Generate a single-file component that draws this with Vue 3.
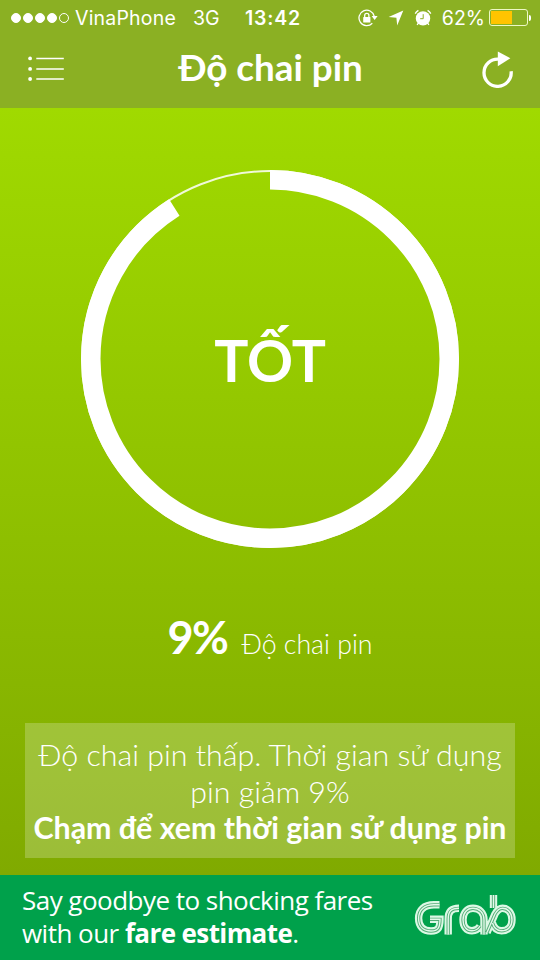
<script setup>
const wear = 9
const radius = 179.25
const circumference = 2 * Math.PI * radius
const ringDash = `${circumference * (1 - wear / 100)} ${circumference}`
const signal = [true, true, true, true, false]
</script>

<template>
  <div class="screen">
    <header class="top">
      <div class="status">
        <div class="carrier">
          <span class="dots">
            <i v-for="(on, n) in signal" :key="n" class="dot" :class="{ on }"></i>
          </span>
          <span class="operator">VinaPhone</span>
          <span class="network">3G</span>
        </div>
        <span class="clock">13:42</span>
        <div class="indicators">
          <svg class="lock" viewBox="0 0 20 18" width="20" height="18">
            <path d="M16.2 7.2A7.7 7.7 0 1 0 14.3 14.2" fill="none" stroke="#fff" stroke-width="1.3" />
            <path d="M13.6 7h6l-3 4z" fill="#fff" />
            <rect x="5.2" y="8" width="7.2" height="5.5" rx=".6" fill="#fff" />
            <path d="M6.7 8.2V6.5a2.1 2.1 0 0 1 4.2 0v1.7" fill="none" stroke="#fff" stroke-width="1.3" />
          </svg>
          <svg class="arrow" viewBox="0 0 16 16" width="16" height="16">
            <path d="M15.3.5 9.2 15.5 8.4 7.8.6 7z" fill="#fff" />
          </svg>
          <svg class="alarm" viewBox="0 0 18 18" width="18" height="18">
            <circle cx="9" cy="9.4" r="7.2" fill="#fff" />
            <path d="M1.2 4.6A9.5 9.5 0 0 1 4.4 1.4M13.6 1.4a9.500 9.500 0 0 1 3.200 3.200" fill="none" stroke="#fff" stroke-width="1.4" />
            <path d="m4.300 14.200-1.200 1.800M13.700 14.200l1.200 1.800" stroke="#fff" stroke-width="1.3" />
            <path d="M9.200 5.200v4.500H6.200" fill="none" stroke="#8bb023" stroke-width="1" />
          </svg>
          <span class="percent">62%</span>
          <span class="battery"><i class="charge"></i></span>
          <i class="nub"></i>
        </div>
      </div>
      <div class="nav">
        <svg viewBox="0 0 36 26" width="36" height="26">
          <g fill="#fff">
            <circle cx="2.1" cy="2.4" r="1.9" />
            <circle cx="2.1" cy="12.9" r="1.9" />
            <circle cx="2.1" cy="23" r="1.9" />
          </g>
          <path d="M8.3 2.6h27.5M8.3 12.9h27.5M8.3 23h27.5" stroke="#fff" stroke-width="1.5" />
        </svg>
        <h1>Độ chai pin</h1>
        <svg viewBox="0 0 32 38" width="32" height="38">
          <path d="M16.5 9.2A13.6 13.6 0 1 0 29.1 21.2" fill="none" stroke="#fff" stroke-width="3.3" />
          <path d="M15.8 1.6v14.6l12.6-8z" fill="#fff" />
        </svg>
      </div>
    </header>

    <main>
      <div class="gauge">
        <svg class="ring" viewBox="0 0 378 378" width="378" height="378">
          <circle cx="189" cy="189" r="188" fill="none" stroke="#fff" stroke-opacity=".85" stroke-width="2" />
          <circle cx="189" cy="189" :r="radius" fill="none" stroke="#fff" stroke-width="19.5" :stroke-dasharray="ringDash" transform="rotate(-90 189 189)" />
        </svg>
        <strong class="grade">TỐT</strong>
      </div>
      <div class="wear">
        <strong>{{ wear }}%</strong>
        <span>Độ chai pin</span>
      </div>
      <section class="notice">
        <p class="light">Độ chai pin thấp. Thời gian sử dụng</p>
        <p class="light">pin giảm {{ wear }}%</p>
        <p class="bold">Chạm để xem thời gian sử dụng pin</p>
      </section>
    </main>

    <footer class="banner">
      <div class="copy">
        <p>Say goodbye to shocking fares</p>
        <p>with our <b>fare estimate</b>.</p>
      </div>
      <svg class="brand" viewBox="0 0 104 44" width="104" height="44" fill="none" aria-label="Grab">
        <g stroke="#dcf8e5" stroke-width="7.4">
          <path id="mark" d="M26.500 10.800H21C11 10.800 5.600 16 5.600 24.300S10.500 37 18 37C25 37 27 34 27 25.300H17M35.200 40.500V25C35.200 17.500 38 14.300 46 14.300M71 40.500V26C71 18.500 66 14.300 60 14.300S50 19 50 25.800S53.500 36.800 59 36.800C63 36.800 65 35.500 67 32M74 38.500 82 20C84 16.500 86 14.300 89.500 14.300C95 14.300 99 19 99 25.700S95 36.800 88.500 36.800C84 36.800 81 34 79.500 29M80.500 14V1" />
        </g>
        <use href="#mark" stroke="#55ad78" stroke-width="3.300" />
        <use href="#mark" stroke="#e4faeb" stroke-width="1.400" />
      </svg>
    </footer>
  </div>
</template>

<style>
body {
  margin: 0;
}
</style>

<style scoped>
.screen {
  width: 540px;
  height: 960px;
  display: flex;
  flex-direction: column;
  overflow: hidden;
  color: #fff;
  font-family: Lato, "Noto Sans", sans-serif;
}
h1,
p {
  margin: 0;
}
svg {
  display: block;
  flex: none;
}
.top {
  height: 108px;
  background: #8bb023;
}
.status {
  height: 35px;
  display: grid;
  grid-template-columns: 234px auto 1fr;
  align-items: center;
  padding: 0 9px 0 11px;
  font-family: Inter, sans-serif;
  font-size: 19.5px;
  white-space: nowrap;
}
.carrier,
.indicators,
.dots {
  display: flex;
  align-items: center;
}
.dots {
  gap: 2px;
}
.dot {
  box-sizing: border-box;
  width: 10px;
  height: 10px;
  border: 1px solid #fff;
  border-radius: 50%;
}
.dot.on {
  background: #fff;
}
.operator {
  margin-left: 6px;
  letter-spacing: 0.2px;
}
.network {
  margin-left: 17px;
}
.clock {
  font-weight: 600;
  letter-spacing: 0.8px;
}
.indicators {
  justify-content: flex-end;
}
.arrow {
  margin-left: 10px;
}
.alarm {
  margin-left: 10px;
}
.percent {
  margin-left: 10px;
}
.battery {
  box-sizing: border-box;
  width: 39px;
  height: 17px;
  margin-left: 4px;
  padding: 1px;
  display: flex;
  border: 1px solid #edf8c5;
  border-radius: 3px;
}
.charge {
  width: 60%;
  background: #ffc400;
}
.nub {
  width: 2px;
  height: 6px;
  margin-left: 1px;
  border-radius: 0 2px 2px 0;
  background: #fff;
}
.nav {
  height: 67px;
  display: flex;
  align-items: center;
  justify-content: space-between;
  padding: 0 26px 0 28px;
}
.nav h1 {
  padding: 0 5px 4px 0;
  font-size: 36.8px;
  line-height: 46px;
  font-weight: 700;
}
main {
  height: 767px;
  display: flex;
  flex-direction: column;
  align-items: center;
  background: linear-gradient(#a0da00, #80aa00);
}
.gauge {
  margin-top: 62px;
  display: grid;
  place-items: center;
}
.ring,
.grade {
  grid-area: 1 / 1;
}
.grade {
  padding-top: 2px;
  font-size: 57px;
  line-height: 70px;
}
.wear {
  height: 60px;
  margin-top: 59px;
  display: flex;
  align-items: baseline;
  gap: 14px;
}
.wear strong {
  font-size: 45px;
  line-height: 60px;
  letter-spacing: -1.5px;
}
.wear span {
  font-size: 26.7px;
  font-weight: 300;
}
.notice {
  box-sizing: border-box;
  width: 490px;
  height: 135px;
  margin-top: 56px;
  padding-top: 13px;
  background: rgba(255, 255, 255, 0.22);
  text-align: center;
  font-size: 30.35px;
  line-height: 36.5px;
  white-space: nowrap;
}
.light {
  font-weight: 300;
}
.bold {
  font-weight: 700;
}
.banner {
  height: 85px;
  display: flex;
  align-items: center;
  justify-content: space-between;
  padding: 0 23px 0 22px;
  background: #00a14b;
  font-family: "Open Sans", sans-serif;
}
.copy {
  padding-bottom: 1px;
  font-size: 26px;
  line-height: 33.5px;
  letter-spacing: -0.53px;
  white-space: nowrap;
}
.copy b {
  letter-spacing: -0.6px;
}
.brand {
  margin-bottom: 4px;
}
</style>
